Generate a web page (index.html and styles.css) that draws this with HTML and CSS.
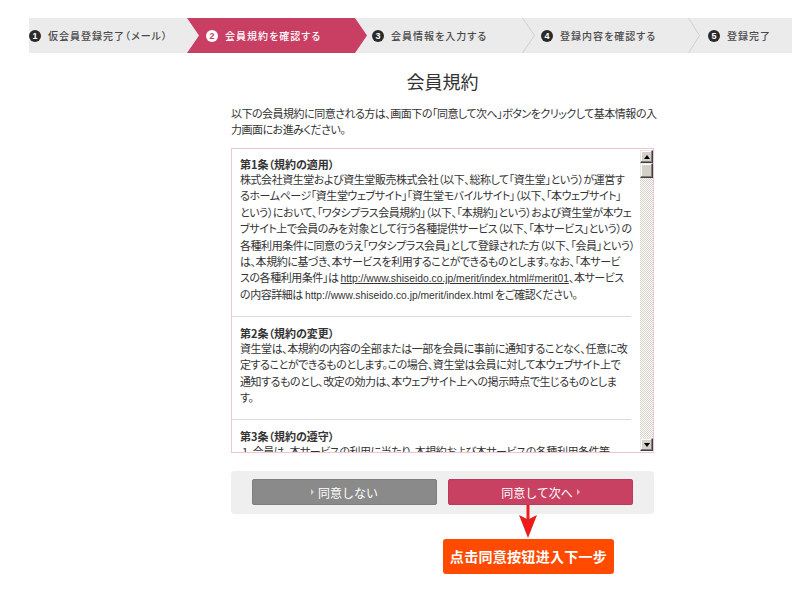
FILE: index.html
```html
<!DOCTYPE html>
<html lang="ja">
<head>
<meta charset="utf-8">
<title>会員規約</title>
<link rel="stylesheet" href="styles.css">
</head>
<body>
<nav class="steps">
  <div class="step step-1"><span class="num">1</span><span class="label">仮会員登録完了（メール）</span></div>
  <div class="step step-2 is-active"><span class="num">2</span><span class="label">会員規約を確認する</span></div>
  <div class="step step-3"><span class="num">3</span><span class="label">会員情報を入力する</span></div>
  <svg class="sep sep-a" viewBox="0 0 13 35" aria-hidden="true"><polyline points="0.5,0 12.5,17.5 0.5,35" fill="none" stroke="#cfcfcf" stroke-width="1"/></svg>
  <div class="step step-4"><span class="num">4</span><span class="label">登録内容を確認する</span></div>
  <svg class="sep sep-b" viewBox="0 0 12 35" aria-hidden="true"><polyline points="0.5,0 11.5,17.5 0.5,35" fill="none" stroke="#cfcfcf" stroke-width="1"/></svg>
  <div class="step step-5"><span class="num">5</span><span class="label">登録完了</span></div>
</nav>

<main class="content">
  <h1 class="title">会員規約</h1>
  <p class="intro">以下の会員規約に同意される方は、画面下の「同意して次へ」ボタンをクリックして基本情報の入<br>力画面にお進みください。</p>

  <div class="terms">
    <div class="terms-body">
      <section class="article">
        <h2 class="article-title">第1条（規約の適用）</h2>
        <p class="article-text">株式会社資生堂および資生堂販売株式会社（以下、総称して「資生堂」という）が運営す<br>るホームページ「資生堂ウェブサイト」「資生堂モバイルサイト」（以下、「本ウェブサイト」<br>という）において、「ワタシプラス会員規約」（以下、「本規約」という）および資生堂が本ウェ<br>ブサイト上で会員のみを対象として行う各種提供サービス（以下、「本サービス」という）の<br>各種利用条件に同意のうえ「ワタシプラス会員」として登録された方（以下、「会員」という）<br>は、本規約に基づき、本サービスを利用することができるものとします。なお、「本サービ<br>スの各種利用条件」は <a class="url link">http://www.shiseido.co.jp/merit/index.html#merit01</a>、本サービス<br>の内容詳細は <span class="url">http://www.shiseido.co.jp/merit/index.html</span> をご確認ください。</p>
      </section>
      <section class="article">
        <h2 class="article-title">第2条（規約の変更）</h2>
        <p class="article-text">資生堂は、本規約の内容の全部または一部を会員に事前に通知することなく、任意に改<br>定することができるものとします。この場合、資生堂は会員に対して本ウェブサイト上で<br>通知するものとし、改定の効力は、本ウェブサイト上への掲示時点で生じるものとしま<br>す。</p>
      </section>
      <section class="article">
        <h2 class="article-title">第3条（規約の遵守）</h2>
        <p class="article-text">&nbsp;1．会員は、本サービスの利用に当たり、本規約および本サービスの各種利用条件等</p>
      </section>
    </div>
    <div class="scrollbar" aria-hidden="true">
      <div class="sb-btn sb-up"></div>
      <div class="sb-thumb"></div>
      <div class="sb-track"></div>
      <div class="sb-btn sb-down"></div>
    </div>
  </div>

  <div class="actions">
    <a class="btn btn-gray"><span class="tri"></span>同意しない</a>
    <a class="btn btn-pink">同意して次へ<span class="tri"></span></a>
    <svg class="callout-arrow" viewBox="0 0 18 34" aria-hidden="true">
      <line x1="9" y1="0" x2="9" y2="16" stroke="#ec1c1c" stroke-width="3"/>
      <path d="M0,10 L9,14.5 L18,10 L9,33 Z" fill="#ec1c1c"/>
    </svg>
    <div class="callout">点击同意按钮进入下一步</div>
  </div>
</main>
</body>
</html>
```

FILE: styles.css
```css
* { box-sizing: border-box; }

html {
  margin: 0;
  padding: 0;
  min-height: 100%;
  background: #fff;
}

body {
  margin: 0;
  padding: 0;
  min-height: 590px;
  background: #fff;
  font-family: "Noto Sans CJK JP", "Noto Sans", sans-serif;
  color: #333;
  font-size: 11px;
}

/* ---------- step bar ---------- */
.steps {
  display: flex;
  height: 35px;
  margin: 18px 0 0 29px;
  background: #ebebeb;
}

.step {
  display: flex;
  align-items: center;
  gap: 7px;
  flex: none;
  height: 35px;
  color: #4a4a4a;
}

.step .num {
  width: 12px;
  height: 12px;
  border-radius: 50%;
  background: #2a2a2a;
  color: #fff;
  font-family: "Liberation Sans", Arial, sans-serif;
  font-size: 9px;
  font-weight: bold;
  line-height: 12px;
  text-align: center;
  flex: none;
}

.step .label {
  font-size: 10px;
  font-weight: 500;
  letter-spacing: 1px;
  font-feature-settings: "palt";
  white-space: nowrap;
}

.step-1 { width: 158px; }

.step-2 {
  width: 180px;
  padding-left: 19px;
  background: #c93e63;
  clip-path: polygon(0 0, 168px 0, 180px 50%, 168px 100%, 0 100%, 12px 50%);
}
.step-2 .label { color: #fff; }
.step-2 .num { background: #fff; color: #c93e63; }

.step-3 { width: 155px; padding-left: 5px; }
.step-4 { width: 153px; padding-left: 6px; }
.step-5 { flex: 1; padding-left: 8px; }

.sep { flex: none; height: 35px; display: block; }
.sep-a { width: 13px; }
.sep-b { width: 12px; }

/* ---------- content ---------- */
.content {
  width: 423px;
  margin-left: 231px;
}

.title {
  margin: 16px 0 0;
  font-size: 18px;
  font-weight: normal;
  line-height: 24px;
  text-align: center;
  color: #333;
}

.intro {
  margin: 11.5px 0 0;
  font-size: 11px;
  line-height: 16.5px;
  letter-spacing: -0.5px;
  font-feature-settings: "palt";
  white-space: nowrap;
}

/* ---------- terms box ---------- */
.terms {
  display: flex;
  height: 305px;
  margin-top: 10.5px;
  border: 1px solid #efc4d3;
}

.terms-body {
  flex: 1;
  overflow: hidden;
}

.article {
  margin-right: 9px;
  padding: 9.5px 0 14px 8px;
  border-bottom: 1px solid #dadada;
}
.article:first-child { padding-top: 9px; }

.article-title {
  margin: 0;
  font-size: 11px;
  font-weight: bold;
  line-height: 13px;
  color: #333;
  font-feature-settings: "palt";
}

.article-text {
  margin: 0;
  font-size: 11px;
  line-height: 16.4px;
  letter-spacing: -0.45px;
  white-space: nowrap;
  font-feature-settings: "palt";
  color: #333;
}

.url {
  font-family: "Liberation Sans", Arial, sans-serif;
  font-size: 10.3px;
  line-height: 1;
  letter-spacing: 0;
  color: #333;
}
.url.link { text-decoration: underline; }

/* ---------- classic scrollbar ---------- */
.scrollbar {
  width: 13px;
  flex: none;
  display: flex;
  flex-direction: column;
  padding-top: 1px;
}

.sb-btn,
.sb-thumb {
  background: #d4d0c8;
  border: 1px solid;
  border-color: #e8e6e2 #404040 #404040 #e8e6e2;
  box-shadow: inset -1px -1px 0 #808080, inset 1px 1px 0 #fff;
  flex: none;
}

.sb-btn {
  height: 13px;
  display: flex;
  align-items: center;
  justify-content: center;
}

.sb-up::before,
.sb-down::before {
  content: "";
  width: 0;
  height: 0;
  border-left: 3.5px solid transparent;
  border-right: 3.5px solid transparent;
}
.sb-up::before { border-bottom: 4px solid #000; }
.sb-down::before { border-top: 4px solid #000; }

.sb-thumb { height: 15px; }

.sb-track {
  flex: 1;
  background: repeating-conic-gradient(#ffffff 0 25%, #d4d0c8 0 50%) 0 0 / 2px 2px;
}

.sb-down { margin-bottom: 1px; }

/* ---------- actions ---------- */
.actions {
  position: relative;
  display: flex;
  gap: 11px;
  height: 43px;
  margin-top: 18px;
  padding: 8px 21px;
  background: #efefef;
  border-radius: 4px;
}

.btn {
  width: 185px;
  height: 26px;
  display: flex;
  align-items: center;
  justify-content: center;
  gap: 4px;
  color: #fff;
  font-size: 12px;
  border-radius: 2px;
  text-decoration: none;
}

.btn-gray { background: #8a8a8a; border: 1px solid #7e7e7e; }
.btn-pink { background: #c84162; border: 1px solid #bd3a5a; }

.tri {
  width: 0;
  height: 0;
  border-top: 3px solid transparent;
  border-bottom: 3px solid transparent;
  border-left: 3px solid rgba(255, 255, 255, 0.6);
}

.callout-arrow {
  position: absolute;
  left: 288px;
  top: 34px;
  width: 18px;
  height: 34px;
  z-index: 2;
}

.callout {
  position: absolute;
  left: 212px;
  top: 68px;
  width: 171px;
  height: 35px;
  z-index: 2;
  background: #ff4a00;
  border-radius: 3px;
  color: #fff;
  font-family: "Noto Sans CJK SC", "Noto Sans", sans-serif;
  font-size: 14px;
  font-weight: bold;
  letter-spacing: 0.3px;
  line-height: 35px;
  text-align: center;
}
```
